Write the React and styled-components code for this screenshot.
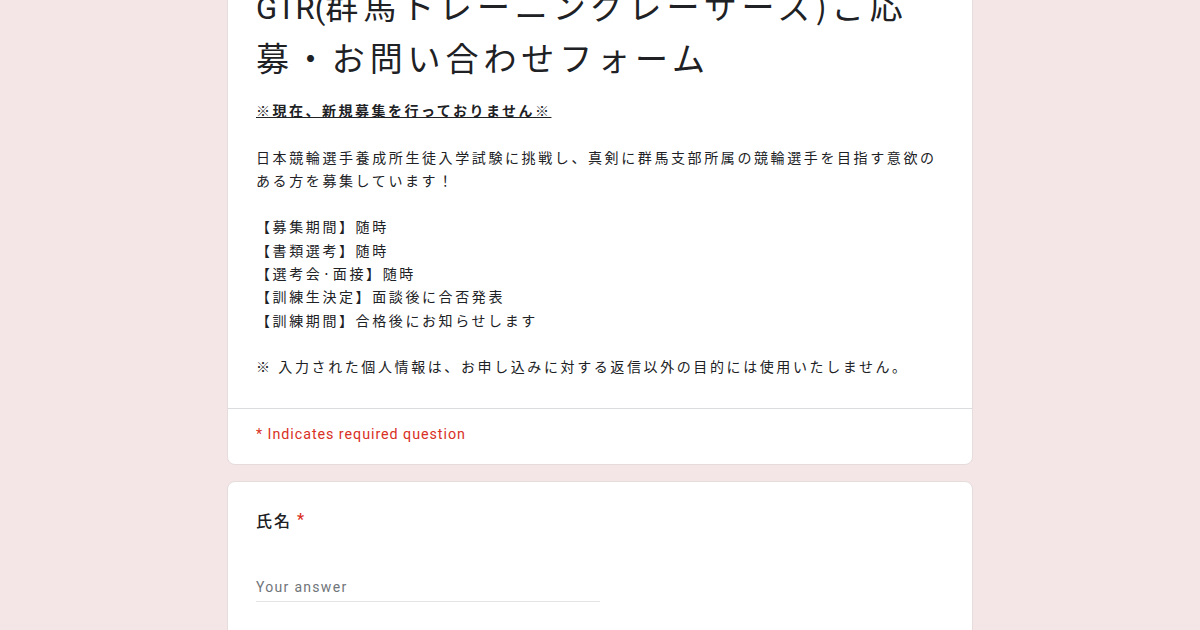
import React from "react";
import styled, { createGlobalStyle } from "styled-components";

const GlobalStyle = createGlobalStyle`
  html, body {
    margin: 0;
    padding: 0;
    background: #f4e6e6;
  }
  body {
    font-family: Roboto, "Noto Sans CJK JP", sans-serif;
    color: #202124;
    overflow: hidden;
  }
`;

const Page = styled.main`
  display: flex;
  flex-direction: column;
  align-items: center;
  gap: 16px;
  margin-top: -44px;
  height: 720px;
`;

const Card = styled.section`
  width: 746px;
  box-sizing: border-box;
  background: #fff;
  border: 1px solid #e6dcdc;
  border-radius: 8px;
  overflow: hidden;
`;

const Header = styled.div`
  padding: 24px 28px 29px;
`;

const Title = styled.h1`
  margin: 0 0 18px;
  font-family: "Noto Sans CJK JP", sans-serif;
  font-size: 33px;
  font-weight: 400;
  line-height: 48px;
  letter-spacing: 4.9px;
  color: #202124;
`;

const Latin = styled.span`
  font-family: Roboto, sans-serif;
  letter-spacing: 0;
  font-size: 31px;
`;

const Description = styled.div`
  font-family: "Noto Sans CJK JP", sans-serif;
  font-size: 14px;
  line-height: 23.3px;
  letter-spacing: 2.6px;
  white-space: pre-wrap;
`;

const Notice = styled.div`
  font-weight: 700;
  text-decoration: underline;
  letter-spacing: 2.5px;
`;

const Footer = styled.div`
  border-top: 1px solid #dadce0;
  padding: 15px 28px 20px;
  font-size: 14.3px;
  line-height: 20px;
  letter-spacing: 0.95px;
  color: #d93025;
`;

const Question = styled.div`
  padding: 26px 28px 40px;
`;

const Label = styled.div`
  display: flex;
  align-items: center;
  gap: 5px;
  font-size: 16px;
  line-height: 24px;
  letter-spacing: 2px;
  font-weight: 500;
  font-family: "Noto Sans CJK JP", sans-serif;
`;

const Required = styled.span`
  color: #d93025;
  font-family: Roboto, sans-serif;
`;

const Answer = styled.div`
  margin-top: 45px;
  width: 344px;
  padding-bottom: 4px;
  border-bottom: 1px solid #e4e4e4;
  font-size: 14px;
  line-height: 20px;
  letter-spacing: 1.3px;
  color: #70757a;
`;

const desc = `日本競輪選手養成所生徒入学試験に挑戦し、真剣に群馬支部所属の競輪選手を目指す意欲のある方を募集しています！

【募集期間】随時
【書類選考】随時
【選考会·面接】随時
【訓練生決定】面談後に合否発表
【訓練期間】合格後にお知らせします

※ 入力された個人情報は、お申し込みに対する返信以外の目的には使用いたしません。`;

export default function App() {
  return (
    <>
      <GlobalStyle />
      <Page>
        <Card>
          <Header>
            <Title>
              <Latin>GTR(</Latin>群馬トレーニングレーサーズ)ご応募・お問い合わせフォーム
            </Title>
            <Description>
              <Notice>※現在、新規募集を行っておりません※</Notice>
              {"\n" + desc}
            </Description>
          </Header>
          <Footer>* Indicates required question</Footer>
        </Card>
        <Card>
          <Question>
            <Label>
              氏名<Required>*</Required>
            </Label>
            <Answer>Your answer</Answer>
          </Question>
        </Card>
      </Page>
    </>
  );
}
